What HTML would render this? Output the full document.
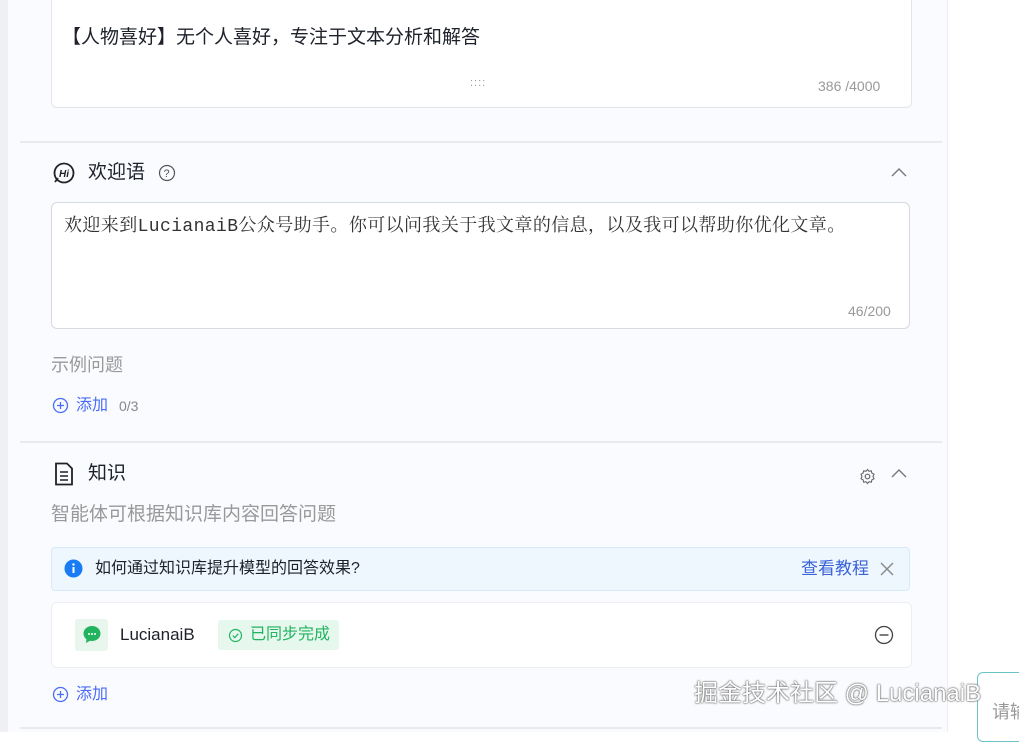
<!DOCTYPE html>
<html><head><meta charset="utf-8"><style>
*{margin:0;padding:0;box-sizing:border-box}
body{width:1019px;height:732px;overflow:hidden;background:#fff;font-family:"Liberation Sans","Noto Sans CJK SC",sans-serif;position:relative;color:#1d2129}
.abs{position:absolute}
#left{left:0;top:0;width:8px;height:732px;background:#f0f0f2}
#panel{left:8px;top:0;width:940px;height:732px;background:#f9fbfe;border-right:1px solid #eceef2}
.card{background:#fff;border:1px solid #e3e5ea;border-radius:6px}
.div{left:20px;width:922px;height:2px;background:#e8eaee}
.t{white-space:nowrap;line-height:1.36}
</style></head><body>
<div id="left" class="abs"></div>
<div id="panel" class="abs"></div>
<div class="abs card" style="left:51px;top:-10px;width:861px;height:118px"></div>
<div class="abs t" style="left:62px;top:25px;font-size:19px;color:#1d2129">【人物喜好】无个人喜好，专注于文本分析和解答</div>
<div class="abs t" style="left:470px;top:76px;font-size:11px;color:#999;letter-spacing:1px">::::</div>
<div class="abs t" style="left:818px;top:77px;font-size:14px;color:#999">386 /4000</div>
<div class="abs div" style="top:141px"></div>
<svg class="abs" style="left:52px;top:161px" width="24" height="24" viewBox="0 0 24 24"><circle cx="12" cy="12" r="9.5" fill="none" stroke="#222" stroke-width="1.8"/><path d="M3 21 L6 17" stroke="#222" stroke-width="1.8"/><text x="7" y="16" font-size="10" font-style="italic" font-weight="bold" fill="#222" font-family="Liberation Sans">Hi</text></svg>
<div class="abs t" style="left:88px;top:160px;font-size:19px">欢迎语</div>
<svg class="abs" style="left:158px;top:164px" width="18" height="18"><circle cx="9" cy="9" r="7.5" fill="none" stroke="#555" stroke-width="1.2"/><text x="5.5" y="13" font-size="11" fill="#555">?</text></svg>
<svg class="abs" style="left:890px;top:166px" width="18" height="12"><path d="M2 10 L9 3 L16 10" fill="none" stroke="#777" stroke-width="1.4"/></svg>
<div class="abs card" style="left:51px;top:202px;width:859px;height:127px;border-color:#d6d9df"></div>
<div class="abs t" style="left:64px;top:215px;font-size:18px;letter-spacing:0.4px;font-family:'Liberation Mono','Noto Serif CJK SC',serif;color:#333">欢迎来到LucianaiB公众号助手。你可以问我关于我文章的信息，以及我可以帮助你优化文章。</div>
<div class="abs t" style="left:848px;top:302px;font-size:14px;color:#999">46/200</div>
<div class="abs t" style="left:51px;top:353px;font-size:18px;color:#999">示例问题</div>
<svg class="abs" style="left:52px;top:397px" width="17" height="17"><circle cx="8.5" cy="8.5" r="7" fill="none" stroke="#4a6cf7" stroke-width="1.3"/><path d="M8.5 5v7M5 8.5h7" stroke="#4a6cf7" stroke-width="1.3"/></svg>
<div class="abs t" style="left:76px;top:395px;font-size:16px;color:#4a6cf7">添加</div>
<div class="abs t" style="left:119px;top:397px;font-size:14px;color:#888">0/3</div>
<div class="abs div" style="top:441px"></div>
<svg class="abs" style="left:54px;top:462px" width="20" height="24"><path d="M2 1.5h11l5 5v16H2z" fill="none" stroke="#222" stroke-width="1.8"/><path d="M6 10h8M6 14h8M6 18h8" stroke="#222" stroke-width="1.6"/></svg>
<div class="abs t" style="left:88px;top:461px;font-size:19px">知识</div>
<svg class="abs" style="left:859px;top:468px" width="17" height="17" viewBox="0 0 17 17"><circle cx="8.5" cy="8.5" r="2.3" fill="none" stroke="#666" stroke-width="1.2"/><path d="M8.5 1.5l1.5 1.8 2.3-.5.6 2.3 2.1 1.1-1 2.3 1 2.3-2.1 1.1-.6 2.3-2.3-.5-1.5 1.8-1.5-1.8-2.3.5-.6-2.3-2.1-1.1 1-2.3-1-2.3 2.1-1.1.6-2.3 2.3.5z" fill="none" stroke="#666" stroke-width="1.1"/></svg>
<svg class="abs" style="left:890px;top:467px" width="18" height="12"><path d="M2 10 L9 3 L16 10" fill="none" stroke="#777" stroke-width="1.4"/></svg>
<div class="abs t" style="left:51px;top:502px;font-size:19px;color:#999">智能体可根据知识库内容回答问题</div>
<div class="abs" style="left:51px;top:547px;width:859px;height:44px;background:#eef7fe;border:1px solid #d6eafb;border-radius:4px"></div>
<svg class="abs" style="left:64px;top:559px" width="19" height="19"><circle cx="9.5" cy="9.5" r="9" fill="#1a7cf5"/><rect x="8.5" y="8" width="2" height="6" fill="#fff"/><circle cx="9.5" cy="5.5" r="1.2" fill="#fff"/></svg>
<div class="abs t" style="left:95px;top:558px;font-size:16px">如何通过知识库提升模型的回答效果?</div>
<div class="abs t" style="left:801px;top:557px;font-size:17px;color:#3a63d8">查看教程</div>
<svg class="abs" style="left:879px;top:561px" width="16" height="16"><path d="M2 2L14 14M14 2L2 14" stroke="#888" stroke-width="1.4"/></svg>
<div class="abs card" style="left:51px;top:602px;width:861px;height:66px;border-color:#eceef2"></div>
<div class="abs" style="left:75px;top:619px;width:33px;height:32px;background:#e9f6ee;border-radius:3px"></div>
<svg class="abs" style="left:81px;top:624px" width="22" height="22"><path d="M11 2C6 2 2.5 5.5 2.5 9.5c0 2.4 1.2 4.4 3 5.8L5 19l4-2.2c.6.1 1.3.2 2 .2 5 0 8.5-3.5 8.5-7.5S16 2 11 2z" fill="#22b35e"/><circle cx="8" cy="10" r="1" fill="#fff"/><circle cx="11" cy="10" r="1" fill="#fff"/><circle cx="14" cy="10" r="1" fill="#fff"/></svg>
<div class="abs t" style="left:120px;top:623px;font-size:17px">LucianaiB</div>
<div class="abs" style="left:218px;top:620px;width:121px;height:30px;background:#e6f7ee;border-radius:3px"></div>
<svg class="abs" style="left:228px;top:628px" width="15" height="15"><circle cx="7.5" cy="7.5" r="6" fill="none" stroke="#22b35e" stroke-width="1.2"/><path d="M4.8 7.6l2 2 3.5-3.8" fill="none" stroke="#22b35e" stroke-width="1.2"/></svg>
<div class="abs t" style="left:250px;top:624px;font-size:16px;color:#22b35e">已同步完成</div>
<svg class="abs" style="left:874px;top:625px" width="20" height="20"><circle cx="10" cy="10" r="8.5" fill="none" stroke="#444" stroke-width="1.3"/><path d="M5.5 10h9" stroke="#444" stroke-width="1.4"/></svg>
<svg class="abs" style="left:52px;top:686px" width="17" height="17"><circle cx="8.5" cy="8.5" r="7" fill="none" stroke="#4a6cf7" stroke-width="1.3"/><path d="M8.5 5v7M5 8.5h7" stroke="#4a6cf7" stroke-width="1.3"/></svg>
<div class="abs t" style="left:76px;top:684px;font-size:16px;color:#4a6cf7">添加</div>
<div class="abs div" style="top:727px"></div>
<div class="abs" style="left:977px;top:672px;width:60px;height:70px;border:1px solid #6cc3c8;border-radius:6px;background:#fff"></div>
<div class="abs t" style="left:992px;top:700px;font-size:18px;color:#999">请输</div>
<div class="abs t" style="left:694px;top:678px;font-size:24px;color:#fff;text-shadow:0 0 2px #555,0 0 1px #333">掘金技术社区 @ LucianaiB</div>
</body></html>
